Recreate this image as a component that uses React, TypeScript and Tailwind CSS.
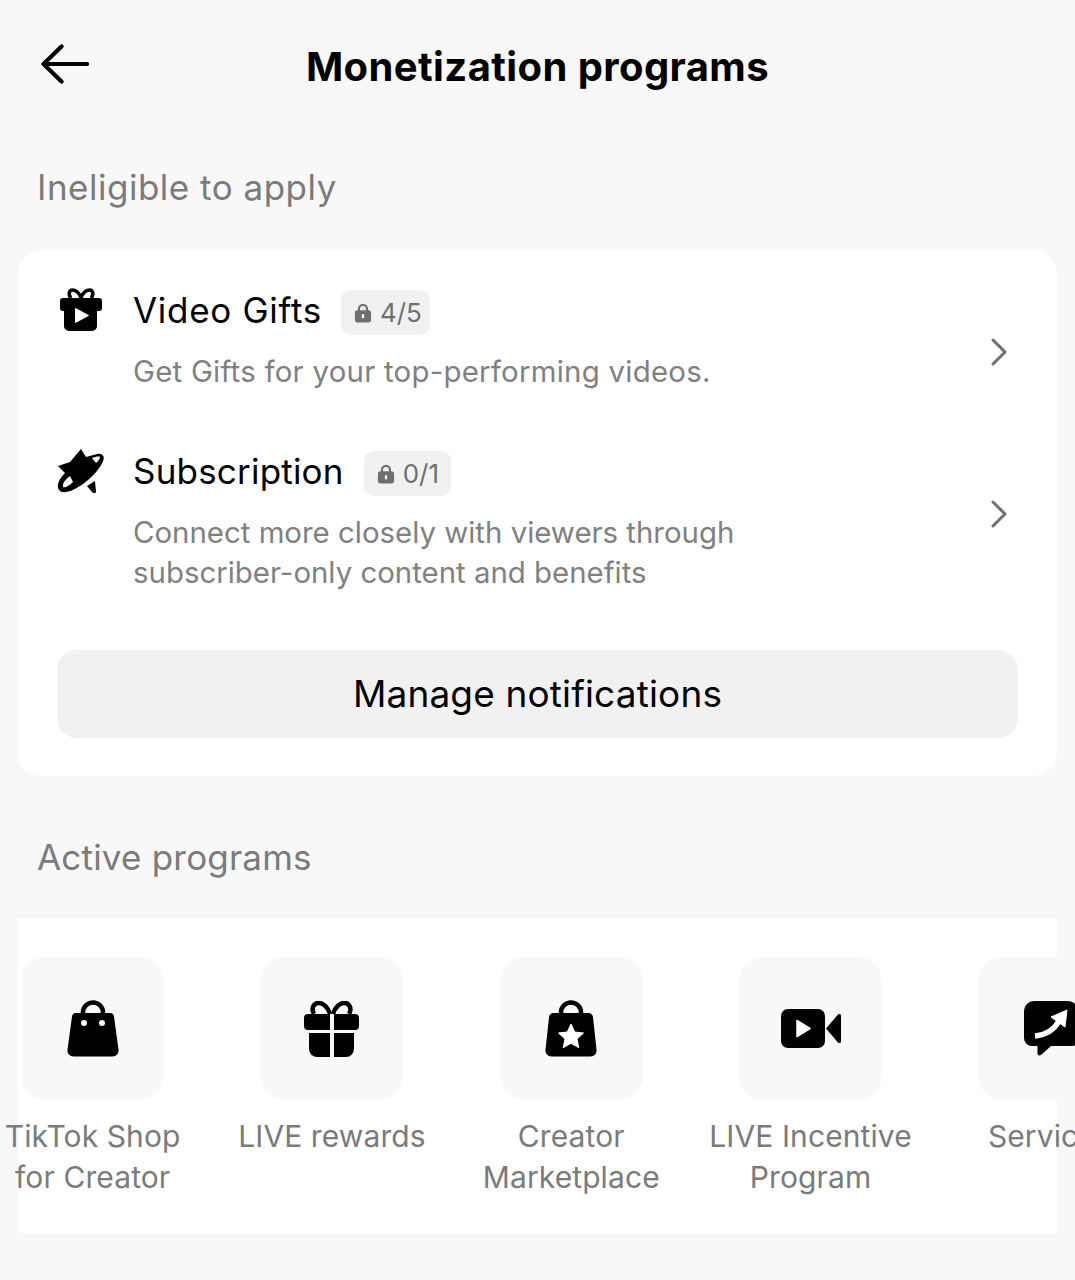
import { ChevronRight } from 'lucide-react';

function BackArrow() {
  return (
    <svg viewBox="0 0 48 40" className="w-[48px] h-[40px]" fill="none" stroke="#000" strokeWidth="4.200" strokeLinecap="round" strokeLinejoin="round">
      <path d="M20.500 2.500L2.500 20l18 17.500M2.500 20H46" />
    </svg>
  );
}

function GiftVideoIcon() {
  return (
    <svg viewBox="0 0 42 43" className="w-[42px] h-[43px]">
      <path d="M21 10C19 4 15 2 12.500 2 9 2 8 7 11 10M21 10c2-6 6-8 8.500-8 3.500 0 4.500 5 1.500 8" fill="none" stroke="#000" strokeWidth="3.600" />
      <path d="M3 10h36a3 3 0 0 1 3 3v7a3 3 0 0 1-3 3h-2v15a5 5 0 0 1-5 5H9a5 5 0 0 1-5-5V23H3a3 3 0 0 1-3-3v-7a3 3 0 0 1 3-3z" fill="#000" />
      <path d="M15.500 20.500L28.500 27.500 15.500 34.500z" fill="#fff" stroke="#fff" strokeWidth="1" strokeLinejoin="round" />
    </svg>
  );
}

function PlanetStarIcon() {
  return (
    <svg viewBox="0 0 47 45" className="w-[47px] h-[45px]">
      <path d="M24 0L29 8 40 5C46 4 48 8 46 12 44 18 36 28 26 35 16 42 6 46 2 41-1 37 2 30 8 24L1 17 13 13z" fill="#000" />
      <path d="M6 38C5 34 9 30 13 27L16 33C12 37 8 39 6 38z" fill="#fff" />
      <path d="M35 9C38 8 42 7 43 8 43 10 41 12 39 14z" fill="#fff" />
      <path d="M30 37L38 32 39 43C38 45 36 44 35 43z" fill="#000" />
    </svg>
  );
}

function LockIcon() {
  return (
    <svg viewBox="0 0 20 22" className="w-[18px] h-[20px] shrink-0">
      <path d="M5.500 9V6.500a4.500 4.500 0 0 1 9 0V9" fill="none" stroke="#6f6f6f" strokeWidth="2.400" />
      <rect x="1" y="8" width="18" height="13.500" rx="3" fill="#6f6f6f" />
      <rect x="8.700" y="12" width="2.600" height="5" rx="1.300" fill="#f1f1f1" />
    </svg>
  );
}

function BagIcon() {
  return (
    <svg viewBox="0 0 52 57" className="w-[52px] h-[57px]">
      <path d="M16 14v-1.500a10 10 0 0 1 20 0V14" fill="none" stroke="#000" strokeWidth="4.500" />
      <path d="M9 13h34a4 4 0 0 1 4 3.500l4.500 33a6 6 0 0 1-6 7H6.500a6 6 0 0 1-6-7L5 16.500A4 4 0 0 1 9 13z" fill="#000" />
      <circle cx="17" cy="23" r="3" fill="#f8f8f8" />
      <circle cx="35" cy="23" r="3" fill="#f8f8f8" />
    </svg>
  );
}

function GiftIcon() {
  return (
    <svg viewBox="0 0 55 56" className="w-[55px] h-[56px]">
      <path d="M26 13C24 6 19 2 15 2 9 2 7 8 10 13M29 13C31 6 36 2 40 2 46 2 48 8 45 13" fill="none" stroke="#000" strokeWidth="4.500" />
      <path d="M4 13h22v16H4a4 4 0 0 1-4-4v-8a4 4 0 0 1 4-4zM30 13h21a4 4 0 0 1 4 4v8a4 4 0 0 1-4 4H30z" fill="#000" />
      <path d="M5 32h21v24H13a8 8 0 0 1-8-8zM30 32h20v16a8 8 0 0 1-8 8H30z" fill="#000" />
    </svg>
  );
}

function StarBagIcon() {
  return (
    <svg viewBox="0 0 52 57" className="w-[52px] h-[57px]">
      <path d="M16 14v-1.500a10 10 0 0 1 20 0V14" fill="none" stroke="#000" strokeWidth="4.500" />
      <path d="M9 13h34a5 5 0 0 1 5 4.500l3.500 32a6 6 0 0 1-6 7H6.500a6 6 0 0 1-6-7L4 17.500A5 5 0 0 1 9 13z" fill="#000" />
      <path d="M26 24l3.700 8 8.800 1-6.500 6 1.800 8.700-7.800-4.400-7.800 4.400 1.800-8.700-6.500-6 8.800-1z" fill="#fff" stroke="#fff" strokeLinejoin="round" />
    </svg>
  );
}

function VideoIcon() {
  return (
    <svg viewBox="0 0 60 40" className="w-[60px] h-[40px]">
      <rect x="0" y="0" width="44" height="39" rx="7" fill="#000" />
      <path d="M45 19.500L57 5.500c1-1.200 3-.5 3 1v26c0 1.500-2 2.200-3 1z" fill="#000" />
      <path d="M16 11.500l13 8-13 8z" fill="#fff" stroke="#fff" strokeWidth="1.500" strokeLinejoin="round" />
    </svg>
  );
}

function ServiceIcon() {
  return (
    <svg viewBox="0 0 52 56" className="w-[52px] h-[56px] shrink-0 overflow-visible">
      <path d="M10 0h34a10 10 0 0 1 10 10v29a6 6 0 0 1-6 6H27L17 54c-1.500 1-3.500.5-3.500-1.500V45H8a8 8 0 0 1-8-8V10A10 10 0 0 1 10 0z" fill="#000" />
      <path d="M11 35c11-1 19-6 24-15" fill="none" stroke="#fff" strokeWidth="5.500" />
      <path d="M27 16l16-7-2 17z" fill="#fff" stroke="#fff" strokeLinejoin="round" />
    </svg>
  );
}

const programs = [
  { icon: <BagIcon />, lines: ['TikTok Shop', 'for Creator'] },
  { icon: <GiftIcon />, lines: ['LIVE rewards'] },
  { icon: <StarBagIcon />, lines: ['Creator', 'Marketplace'] },
  { icon: <VideoIcon />, lines: ['LIVE Incentive', 'Program'] },
  { icon: <ServiceIcon />, lines: ['Services'] },
];

function Badge({ text, className }: { text: string; className: string }) {
  return (
    <span className={`mt-[5px] flex items-center gap-[8px] h-[45px] pl-[13px] rounded-[10px] bg-[#f1f1f1] text-[26px] text-[#6f6f6f] ${className}`}>
      <LockIcon />
      {text}
    </span>
  );
}

export default function App() {
  return (
    <div
      className="w-[1075px] h-[1280px] overflow-hidden bg-[#f8f8f8]"
      style={{ fontFamily: 'Inter, "Noto Sans", sans-serif' }}
    >
      <header className="h-[132px] flex items-center relative">
        <div className="absolute left-[41px] top-[44px]"><BackArrow /></div>
        <h1 className="w-full pt-[2px] text-center text-[40px] font-bold text-black tracking-[0.4px]">
          Monetization programs
        </h1>
      </header>

      <h2 className="ml-[37px] mt-[31px] mb-[39px] text-[35px] leading-[48px] tracking-[0.5px] text-[#7b7b7b]">Ineligible to apply</h2>

      <section className="mx-[18px] h-[526px] rounded-[24px] bg-white pt-[38px] px-[39px]">
        <div className="flex">
          <div className="w-[76px] shrink-0 pl-[3px]"><GiftVideoIcon /></div>
          <div className="flex-1">
            <div className="flex items-center gap-[19px] h-[44px]">
              <span className="text-[35px] tracking-[0.7px] text-black">Video Gifts</span>
              <Badge text="4/5" className="pr-[8px]" />
            </div>
            <p className="mt-[20px] text-[29.400px] tracking-[0.25px] leading-[40px] text-[#808080]">Get Gifts for your top-performing videos.</p>
          </div>
          <ChevronRight className="mr-[-5px] mt-[40px] w-[48px] h-[48px] text-[#6f6f6f]" strokeWidth={1.500} />
        </div>

        <div className="flex mt-[57px]">
          <div className="w-[76px] shrink-0"><PlanetStarIcon /></div>
          <div className="flex-1">
            <div className="flex items-center gap-[20px] h-[44px]">
              <span className="text-[35px] tracking-[0.2px] text-black">Subscription</span>
              <Badge text="0/1" className="pr-[12px]" />
            </div>
            <p className="mt-[20px] text-[29.400px] leading-[40px] text-[#808080]">
              Connect more closely with viewers through
              <br />
              subscriber-only content and benefits
            </p>
          </div>
          <ChevronRight className="mr-[-5px] mt-[41px] w-[48px] h-[48px] text-[#6f6f6f]" strokeWidth={1.500} />
        </div>

        <button className="mt-[57px] w-[961px] h-[88px] rounded-[20px] bg-[#f1f1f1] text-[37px] tracking-[0.15px] text-black">
          Manage notifications
        </button>
      </section>

      <h2 className="ml-[37px] mt-[57px] mb-[37px] text-[35px] leading-[48px] tracking-[0.2px] text-[#7b7b7b]">Active programs</h2>

      <section className="mx-[18px] h-[315px] bg-white pt-[39px]">
        <div className="flex ml-[-45px]">
          {programs.map((p) => (
            <div key={p.lines[0]} className="w-[239.300px] shrink-0 flex flex-col items-center">
              <div className="w-[143px] h-[143px] rounded-[24px] bg-[#f8f8f8] flex items-center justify-center">
                {p.icon}
              </div>
              <p className="mt-[16px] text-center whitespace-nowrap text-[30px] tracking-[0.1px] leading-[41px] text-[#7b7b7b]">
                {p.lines.map((l) => (
                  <span key={l} className="block">{l}</span>
                ))}
              </p>
            </div>
          ))}
        </div>
      </section>
    </div>
  );
}
